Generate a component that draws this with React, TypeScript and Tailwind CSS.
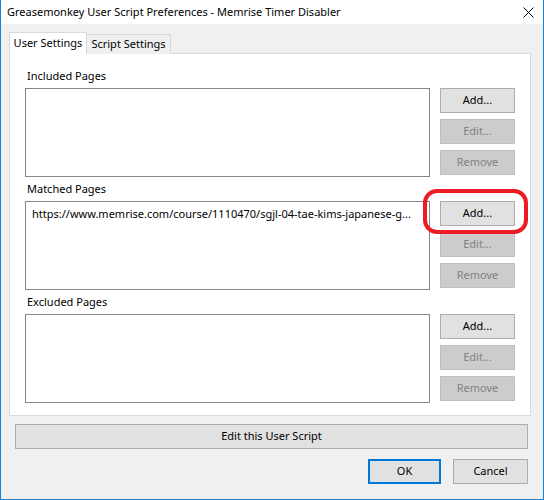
import React from "react";

const font = { fontFamily: '"Noto Sans", "Open Sans", sans-serif' };

function Btn({ label, disabled }: { label: string; disabled?: boolean }) {
  return (
    <div
      className={
        "h-[25px] w-[75px] flex items-center justify-center border text-[11px] " +
        (disabled
          ? "bg-[#cccccc] border-[#bfbfbf] text-[#838383]"
          : "bg-[#e1e1e1] border-[#adadad] text-black")
      }
    >
      {label}
    </div>
  );
}

function Section({
  title,
  content,
  highlight,
}: {
  title: string;
  content?: string;
  highlight?: boolean;
}) {
  return (
    <div className="flex flex-col">
      <div className="h-[24px] flex items-center pl-[2px] text-[11px] text-black">{title}</div>
      <div className="flex">
        <div className="flex-1 h-[89px] border border-[#828790] bg-white overflow-hidden">
          {content && (
            <div className="pl-[6px] pt-[4px] text-[11px] leading-[16px] whitespace-nowrap text-black">
              {content}
            </div>
          )}
        </div>
        <div className="ml-[10px] flex flex-col gap-[6px]">
          <div className="relative">
            <Btn label="Add..." />
            {highlight && (
              <div className="absolute left-[-17px] top-[-12px] w-[105px] h-[45px] border-[4px] border-[#ed1c24] rounded-[14px]" />
            )}
          </div>
          <Btn label="Edit..." disabled />
          <Btn label="Remove" disabled />
        </div>
      </div>
    </div>
  );
}

export default function App() {
  return (
    <div
      className="w-[544px] h-[500px] bg-[#f0f0f0] border-l border-r border-b border-[#1883d7] flex flex-col text-black"
      style={font}
    >
      <div className="h-[24px] bg-white flex items-center justify-between pl-[6px] pr-[9px] shrink-0">
        <span className="text-[11px]">Greasemonkey User Script Preferences - Memrise Timer Disabler</span>
        <svg width="11" height="11" viewBox="0 0 11 11">
          <path d="M0.5 0.5 L10.5 10.5 M10.5 0.5 L0.5 10.5" stroke="#000" strokeWidth="1" />
        </svg>
      </div>
      <div className="flex flex-col pl-[8px] pr-[12px] pt-[8px]">
        <div className="flex items-end h-[22px] relative z-10">
          <div className="h-[22px] w-[78px] bg-white border border-b-0 border-[#d9d9d9] flex items-center justify-center text-[11px]">
            User Settings
          </div>
          <div className="h-[20px] w-[85px] -ml-px bg-[#f0f0f0] border border-b-0 border-[#d9d9d9] flex items-center justify-center text-[11px]">
            Script Settings
          </div>
        </div>
        <div className="-mt-px h-[363px] bg-white border border-[#d9d9d9] pt-[10px] px-[15px] flex flex-col">
          <Section title="Included Pages" />
          <Section
            title="Matched Pages"
            content="https://www.memrise.com/course/1110470/sgjl-04-tae-kims-japanese-g..."
            highlight
          />
          <Section title="Excluded Pages" />
        </div>
      </div>
      <div className="pl-[14px] pr-[15px] mt-[8px]">
        <div className="h-[25px] bg-[#e1e1e1] border border-[#adadad] flex items-center justify-center text-[11px]">
          Edit this User Script
        </div>
        <div className="mt-[10px] flex justify-end gap-[12px]">
          <div className="h-[25px] w-[73px] bg-[#e1e1e1] border-2 border-[#0078d7] flex items-center justify-center text-[11px]">
            OK
          </div>
          <div className="h-[25px] w-[75px] bg-[#e1e1e1] border border-[#adadad] flex items-center justify-center text-[11px]">
            Cancel
          </div>
        </div>
      </div>
    </div>
  );
}
